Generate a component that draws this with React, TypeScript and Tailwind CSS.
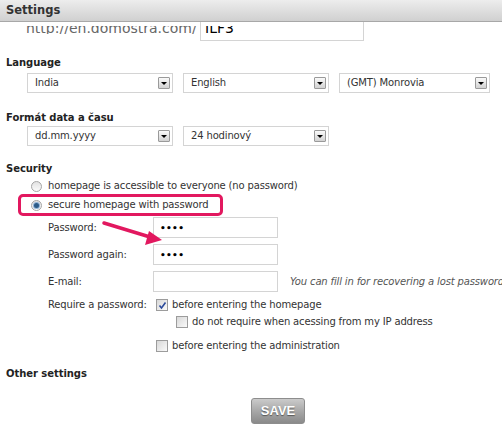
import React from "react";

type SelectProps = { value: string; width?: string };

function FakeSelect({ value, width = "w-[146px]" }: SelectProps) {
  return (
    <div
      className={`${width} shrink-0 h-[20px] border border-[#d4d4d4] bg-white flex items-center justify-between pl-[7px] pr-[2px]`}
    >
      <span className="leading-[12px] text-[#333]">{value}</span>
      <span className="w-[12px] h-[12px] border border-[#9a9a9a] rounded-[1px] bg-gradient-to-b from-[#fafafa] to-[#d2d2d2] flex items-center justify-center">
        <span className="block w-0 h-0 border-l-[3px] border-r-[3px] border-t-[3px] border-l-transparent border-r-transparent border-t-black" />
      </span>
    </div>
  );
}

function Radio({ checked }: { checked?: boolean }) {
  return (
    <span className="shrink-0 w-[11px] h-[11px] rounded-full border border-[#a5a5a5] bg-gradient-to-b from-[#e2e2e2] to-[#fbfbfb] flex items-center justify-center">
      {checked && <span className="w-[5px] h-[5px] rounded-full bg-[#2d5c88] ring-1 ring-[#8fb2d6]" />}
    </span>
  );
}

function Check({ checked }: { checked?: boolean }) {
  return (
    <span className="shrink-0 w-[12px] h-[12px] border border-[#9c9c9c] bg-gradient-to-br from-[#d8d8d8] to-[#fafafa] flex items-center justify-center">
      {checked && (
        <svg width="9" height="9" viewBox="0 0 9 9">
          <path d="M1.5 4.5 L3.5 7 L7.5 1.5" fill="none" stroke="#2b4a9b" strokeWidth="1.6" />
        </svg>
      )}
    </span>
  );
}

function TextBox({ value }: { value?: string }) {
  return (
    <div className="shrink-0 w-[125px] h-[21px] border border-[#d4d4d4] bg-white flex items-center px-[6px]">
      <span className="text-[9px] leading-[12px] tracking-[0.3px] text-black font-bold">{value}</span>
    </div>
  );
}

function Heading({ children, className }: { children: React.ReactNode; className: string }) {
  return <h3 className={`${className} h-[12px] leading-[12px] text-[10px] font-bold tracking-[-0.05px] text-[#222]`}>{children}</h3>;
}

export default function App() {
  return (
    <div className="relative w-[502px] h-[426px] overflow-hidden bg-white font-['DejaVu_Sans',Verdana,sans-serif] text-[10px] tracking-[-0.15px] text-[#333]">
      {/* title bar */}
      <div className="h-[22px] border-b border-[#a8a8a8] bg-gradient-to-b from-[#ededed] to-[#d0d0d0] flex items-center px-[6px]">
        <span className="text-[11.5px] font-bold tracking-normal text-[#333]">Settings</span>
      </div>

      {/* scrolled url row, upper part hidden under the bar */}
      <div className="h-[19px] flex pl-[26px] tracking-normal">
        <div className="w-[174px] mt-[4px] h-[8px] overflow-hidden flex items-end">
          <span className="block text-[14px] leading-[14px] -mb-[1px] text-[#666] whitespace-nowrap">http://en.domostra.com/</span>
        </div>
        <div className="w-[164px] h-[19px] border border-t-0 border-[#d4d4d4] pl-[4px]">
          <div className="mt-[4px] h-[8px] overflow-hidden flex items-end">
            <span className="block text-[14px] leading-[14px] -mb-[1px] text-black">ILF3</span>
          </div>
        </div>
      </div>

      <div className="px-[6px]">
        <Heading className="mt-[16px]">Language</Heading>
        <div className="mt-[4px] pl-[21px] flex gap-[10px]">
          <FakeSelect value="India" />
          <FakeSelect value="English" />
          <FakeSelect value="(GMT) Monrovia" width="w-[151px]" />
        </div>

        <Heading className="mt-[19px]">Formát data a času</Heading>
        <div className="mt-[2px] pl-[21px] flex gap-[10px]">
          <FakeSelect value="dd.mm.yyyy" />
          <FakeSelect value="24 hodinový" />
        </div>

        <Heading className="mt-[17px]">Security</Heading>
        <div className="mt-[4px] pl-[25px] flex items-center gap-[6px] h-[14px] leading-[12px]">
          <Radio />
          <span>homepage is accessible to everyone (no password)</span>
        </div>
        <div className="mt-[1px] ml-[12px] w-[205px] h-[22px] border-[3px] border-[#e2185f] rounded-[5px] flex items-center gap-[6px] pl-[10px] leading-[12px]">
          <Radio checked />
          <span>secure homepage with password</span>
        </div>

        <div className="pl-[42px] mt-[1px] flex flex-col gap-[6px] leading-[12px]">
          <div className="flex items-center">
            <span className="w-[105px] shrink-0">Password:</span>
            <TextBox value="••••" />
          </div>
          <div className="flex items-center">
            <span className="w-[105px] shrink-0">Password again:</span>
            <TextBox value="••••" />
          </div>
          <div className="flex items-center">
            <span className="w-[105px] shrink-0">E-mail:</span>
            <TextBox />
            <span className="ml-[12px] italic text-[#555] whitespace-nowrap">
              You can fill in for recovering a lost password
            </span>
          </div>
        </div>

        <div className="pl-[42px] mt-[6px] flex leading-[12px]">
          <span className="w-[108px] shrink-0 h-[14px] flex items-center">Require a password:</span>
          <div className="flex flex-col">
            <div className="flex items-center gap-[4px] h-[14px]">
              <Check checked />
              <span>before entering the homepage</span>
            </div>
            <div className="flex items-center gap-[4px] h-[14px] mt-[3px] pl-[20px]">
              <Check />
              <span>do not require when acessing from my IP address</span>
            </div>
            <div className="flex items-center gap-[4px] h-[14px] mt-[10px]">
              <Check />
              <span>before entering the administration</span>
            </div>
          </div>
        </div>

        <Heading className="mt-[15px]">Other settings</Heading>

        <div className="mt-[18px] flex pl-[245px]">
          <button className="w-[54px] h-[26px] rounded-[3px] border border-[#8d8d8d] bg-gradient-to-b from-[#cbcbcb] via-[#a8a8a8] to-[#8a8a8a] text-white text-[13px] tracking-normal font-bold font-['Liberation_Sans',Arial,sans-serif] [text-shadow:0_1px_1px_rgba(0,0,0,0.45)]">
            SAVE
          </button>
        </div>
      </div>

      {/* pink pointer arrow */}
      <svg className="absolute left-0 top-0 pointer-events-none" width="502" height="426">
        <line x1="104" y1="223" x2="150" y2="237" stroke="#e2185f" strokeWidth="3.5" strokeLinecap="round" />
        <polygon points="162,240 145,245 149,231" fill="#e2185f" />
      </svg>
    </div>
  );
}
